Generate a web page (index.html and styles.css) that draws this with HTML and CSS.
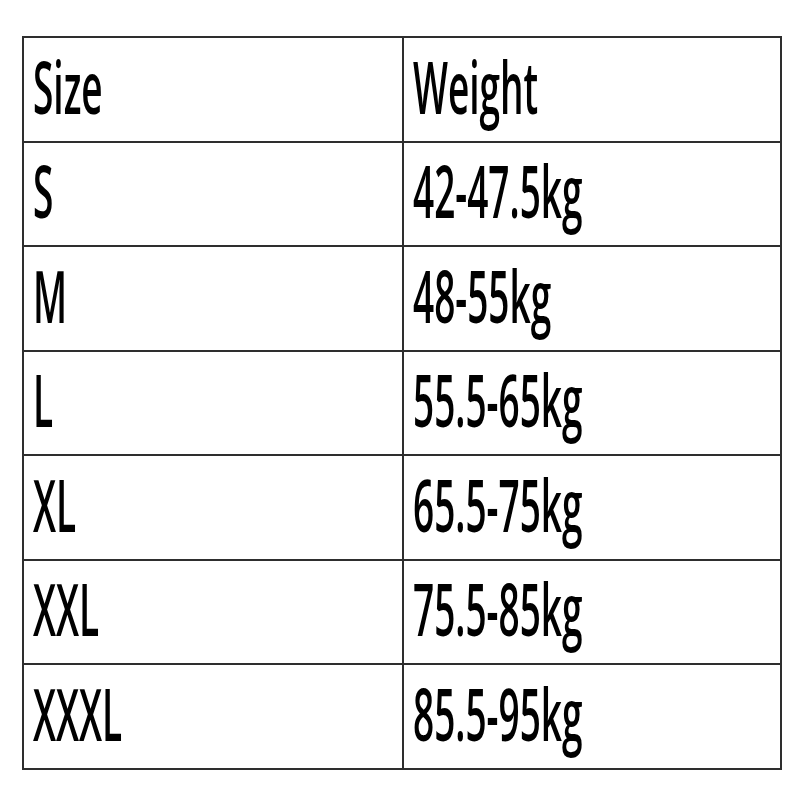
FILE: index.html
```html
<!DOCTYPE html>
<html>
<head>
<meta charset="utf-8">
<link rel="stylesheet" href="styles.css">
</head>
<body>
<table class="size-table">
  <tr><td><span class="txt">Size</span></td><td><span class="txt">Weight</span></td></tr>
  <tr><td><span class="txt">S</span></td><td><span class="txt">42-47.5kg</span></td></tr>
  <tr><td><span class="txt">M</span></td><td><span class="txt">48-55kg</span></td></tr>
  <tr><td><span class="txt">L</span></td><td><span class="txt">55.5-65kg</span></td></tr>
  <tr><td><span class="txt">XL</span></td><td><span class="txt">65.5-75kg</span></td></tr>
  <tr><td><span class="txt">XXL</span></td><td><span class="txt">75.5-85kg</span></td></tr>
  <tr><td><span class="txt">XXXL</span></td><td><span class="txt">85.5-95kg</span></td></tr>
</table>
</body>
</html>
```
FILE: styles.css
```css
html, body {
  margin: 0;
  padding: 0;
  background: #ffffff;
}
body {
  padding: 36px 0 0 22px;
}
.size-table {
  border-collapse: collapse;
  width: 760px;
  font-family: "Open Sans", "Liberation Sans", sans-serif;
  font-weight: 600;
  color: #000;
}
.size-table td {
  border: 2px solid #2e2e2e;
  height: 104.5px;
  padding: 0 0 4px 9px;
  vertical-align: middle;
  box-sizing: border-box;
}
.size-table td:first-child {
  width: 380px;
}
.txt {
  display: inline-block;
  font-size: 37px;
  line-height: 36px;
  letter-spacing: 0;
  transform: scaleY(1.95);
  transform-origin: 0 50%;
}
```
